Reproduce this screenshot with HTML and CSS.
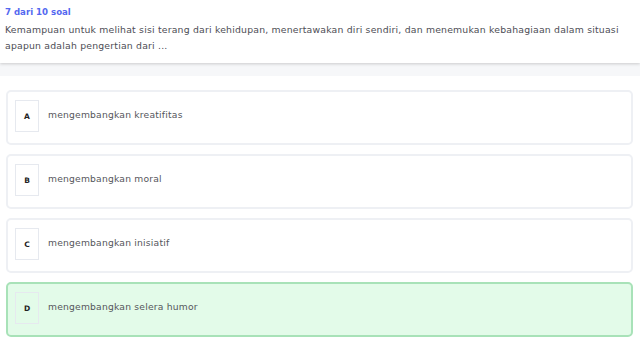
FILE: index.html
```html
<!DOCTYPE html>
<html>
<head>
  <title>Soal 7</title>
  <link rel="stylesheet" href="styles.css">
</head>
<body>

<div class="question-box">
  <div class="counter">7 dari 10 soal</div>
  <p class="question">Kemampuan untuk melihat sisi terang dari kehidupan, menertawakan diri sendiri, dan menemukan kebahagiaan dalam situasi apapun adalah pengertian dari ...</p>
</div>
<div class="divider"></div>

<div class="options">
  <div class="option">
    <div class="letter">A</div>
    <div class="option-text">mengembangkan kreatifitas</div>
  </div>
  <div class="option">
    <div class="letter">B</div>
    <div class="option-text">mengembangkan moral</div>
  </div>
  <div class="option">
    <div class="letter">C</div>
    <div class="option-text">mengembangkan inisiatif</div>
  </div>
  <div class="option selected">
    <div class="letter">D</div>
    <div class="option-text">mengembangkan selera humor</div>
  </div>
</div>

</body>
</html>
```

FILE: styles.css
```css
body { font-family: "DejaVu Sans", Arial, sans-serif; margin: 0px; background-color: #fff; }
.question-box {
  background-color: #fff;
  padding: 5px 5px 9px 5px;
  box-shadow: 0 1px 3px rgba(0, 0, 0, 0.18);
  position: relative;
}
.counter {
  color: #5468f0;
  font-size: 8.6px;
  font-weight: 600;
  line-height: 14px;
}
.question {
  margin: 3px 0 0 0;
  font-size: 9.3px;
  line-height: 16px;
  letter-spacing: 0.2px;
  color: #4d4d55;
}
.divider {
  height: 13px;
  background-color: #f6f7f9;
}
.options {
  padding: 14px 7px 0 6px;
}
.option {
  display: flex;
  align-items: flex-start;
  height: 43px;
  border: 2px solid #eef0f4;
  border-radius: 5px;
  padding: 8px 7px 0 7px;
  margin-bottom: 9px;
  background-color: #fff;
}
.option.selected {
  background-color: #e3fbe9;
  border-color: #a8e2b8;
}
.letter {
  width: 22px;
  height: 30px;
  border: 1px solid #e6e9ef;
  display: flex;
  align-items: center;
  justify-content: center;
  font-size: 7.5px;
  font-weight: 700;
  color: #222;
  margin-right: 9px;
  background-color: #fff;
}
.selected .letter { background-color: transparent; }
.option-text {
  font-size: 9.2px;
  letter-spacing: 0.2px;
  line-height: 29px;
  color: #55565c;
}
```
